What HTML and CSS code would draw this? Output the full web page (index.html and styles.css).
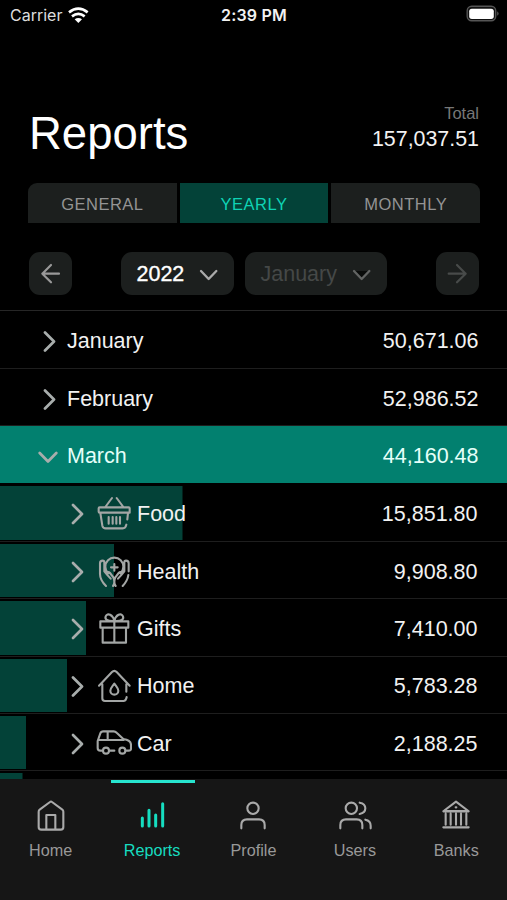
FILE: index.html
```html
<!DOCTYPE html>
<html lang="en">
<head>
<meta charset="utf-8">
<title>Reports</title>
<link rel="stylesheet" href="styles.css">
</head>
<body>
<div class="app">
  <header class="status">
    <div class="carrier">Carrier
      <svg width="21" height="16" viewBox="204 19 63 48" fill="none" stroke="#fff" stroke-width="8"><path d="M207 35Q235 13 263 35M216 47Q235 32 254 47"/><path d="M224 56Q235 48 246 56L235 67Z" fill="#fff" stroke="none"/></svg>
    </div>
    <div class="time">2:39 PM</div>
    <div class="battery"><svg width="34" height="18" viewBox="0 0 34 18"><rect x="1.2" y="1.2" width="28.5" height="14.6" rx="4.5" fill="#111" stroke="#555" stroke-width="1.4"/><rect x="3.2" y="3.7" width="24.6" height="10.2" rx="2.6" fill="#fff"/><path d="M31.3 6.2Q33.8 8.5 31.3 10.8Z" fill="#666"/></svg></div>
  </header>

  <section class="heading">
    <h1>Reports</h1>
    <div class="total"><span class="total-label">Total</span><span class="total-value">157,037.51</span></div>
  </section>

  <nav class="segments">
    <button class="segment">GENERAL</button>
    <button class="segment active">YEARLY</button>
    <button class="segment">MONTHLY</button>
  </nav>

  <section class="period">
    <button class="step"><svg width="43" height="43" viewBox="88 245 129 129"><path d="M178 310H128M154 284L128 310L154 336"/></svg></button>
    <div class="selects">
      <button class="select year">2022 <svg width="20" height="14" viewBox="598 292 60 42"><path d="M604 301L627 325L650 301"/></svg></button>
      <button class="select month">January <svg width="20" height="14" viewBox="598 292 60 42"><path d="M604 301L627 325L650 301"/></svg></button>
    </div>
    <button class="step off"><svg width="43" height="43" viewBox="548 245 129 129"><path d="M586 310H637M611 284L637 310L611 336"/></svg></button>
  </section>

  <main class="list">
    <div class="row first"><svg class="chev" width="22" height="22" viewBox="0 0 22 22"><path d="M7 2.5L16 11.5L7 20.5"/></svg><span class="name">January</span><span class="amount">50,671.06</span></div>
    <div class="row"><svg class="chev" width="22" height="22" viewBox="0 0 22 22"><path d="M7 2.5L16 11.5L7 20.5"/></svg><span class="name">February</span><span class="amount">52,986.52</span></div>
    <div class="row open"><svg class="chev" width="22" height="22" viewBox="0 0 22 22"><path d="M1.7 8L10 16.5L18.3 8"/></svg><span class="name">March</span><span class="amount">44,160.48</span></div>

    <div class="row sub lead" style="--bar:182.5px"><svg class="chev" width="22" height="22" viewBox="0 0 22 22"><path d="M7 2L16 11L7 20"/></svg>
      <svg class="icon" width="36" height="36" viewBox="288 48 108 108"><path d="M336 54L316 81M350 54L370 81M376 98H299Q296 98 296 95V85Q296 82 299 82H386Q389 82 389 85V98H376M301 99L307 137Q309 145 317 145H368Q377 145 379 134M384 99L382 118M326 111V131M338 111V131M349 111V131M360 111V131"/></svg>
      <span class="name">Food</span><span class="amount">15,851.80</span></div>
    <div class="row sub" style="--bar:114px"><svg class="chev" width="22" height="22" viewBox="0 0 22 22"><path d="M7 2L16 11L7 20"/></svg>
      <svg class="icon" width="36" height="36" viewBox="288 220 108 108"><path d="M343 250V270M333 260H353M325 278Q316 270 316 258A27 27 0 0 1 370 258Q370 270 361 278M313 272V245Q313 240 308 240Q300 240 300 248V280Q300 298 318 316M373 272V245Q373 240 378 240Q386 240 386 248V272M385 283Q383 300 368 316M313 272L323 284L332 294M322 276Q326 272 330 277L340 290Q343 296 343 304Q343 311 339 316M373 272L363 284L354 294M364 276Q360 272 356 277L346 290Q343 296 343 304Q343 311 347 316"/></svg>
      <span class="name">Health</span><span class="amount">9,908.80</span></div>
    <div class="row sub" style="--bar:86px"><svg class="chev" width="22" height="22" viewBox="0 0 22 22"><path d="M7 2L16 11L7 20"/></svg>
      <svg class="icon" width="36" height="36" viewBox="288 391 108 108"><path d="M301 422H385V441H301ZM308 441V486H378V441M343 422V486M341 421C321 422 314 415 317 407C322 395 339 402 343 421C347 402 364 395 369 407C372 415 365 422 345 421"/></svg>
      <span class="name">Gifts</span><span class="amount">7,410.00</span></div>
    <div class="row sub" style="--bar:67px"><svg class="chev" width="22" height="22" viewBox="0 0 22 22"><path d="M7 2.5L16 11.5L7 20.5"/></svg>
      <svg class="icon" width="36" height="36" viewBox="288 113 108 108"><path d="M297 166L336 125Q343 118 350 125L389 166M307 162V204Q307 212 315 212H370Q378 212 380 200M379 162V184M343 160C337 169 331 174 331 181A12 12 0 0 0 355 181C355 174 349 169 343 160Z"/></svg>
      <span class="name">Home</span><span class="amount">5,783.28</span></div>
    <div class="row sub" style="--bar:26px"><svg class="chev" width="22" height="22" viewBox="0 0 22 22"><path d="M7 2L16 11L7 20"/></svg>
      <svg class="icon" width="36" height="36" viewBox="288 286 108 108"><path d="M307 360H301Q293 360 293 352V331L301 308Q303 302 310 302H341Q346 302 350 306L370 325Q393 328 393 343V354Q393 360 386 360H378M329 360H343M296 328H371M323 303V327"/><circle cx="318" cy="360" r="9"/><circle cx="367" cy="360" r="9"/></svg>
      <span class="name">Car</span><span class="amount">2,188.25</span></div>
    <div class="row sub" style="--bar:22.5px"></div>
  </main>

  <nav class="tabs">
    <a class="tab"><svg width="34" height="34" viewBox="102 87 102 102"><path d="M116 125Q116 121 119 119L150 96Q153 93 156 96L187 119Q190 121 190 125V171Q190 179 182 179H124Q116 179 116 171ZM139 179V135H166V179"/></svg><span>Home</span></a>
    <a class="tab active"><svg width="34" height="34" viewBox="406 87 102 102"><path class="bars" d="M428 144V168M448 121V168M468 135V168M489 101V168"/></svg><span>Reports</span></a>
    <a class="tab"><svg width="34" height="34" viewBox="-51 87 102 102"><circle cx="0" cy="115" r="17"/><path d="M-35 175V165Q-35 148 -18 148H18Q35 148 35 165V175"/></svg><span>Profile</span></a>
    <a class="tab"><svg width="34" height="34" viewBox="256 87 102 102"><circle cx="296" cy="115" r="17"/><path d="M263 175V165Q263 148 280 148H312Q329 148 329 165V175M321 98Q338 101 338 115Q338 129 321 132M338 149Q354 152 354 167V175"/></svg><span>Users</span></a>
    <a class="tab"><svg width="34" height="34" viewBox="557 87 102 102"><path d="M571 123L608 95L645 123ZM570 124H646M570 172H646M577 131V164M592 131V164M608 131V164M623 131V164M639 131V164M607 112H609"/></svg><span>Banks</span></a>
  </nav>
</div>
</body>
</html>
```
FILE: styles.css
```css
* { box-sizing: border-box; }
body { margin: 0; background: #000; color: #f2f2f2; font-family: "Liberation Sans", Arial, sans-serif; }
button { border: 0; padding: 0; font: inherit; color: inherit; }
h1 { margin: 0; font-weight: 400; }
svg { display: block; flex: none; }
path, circle { stroke-linecap: round; stroke-linejoin: round; }

.app { width: 507px; height: 900px; display: flex; flex-direction: column; overflow: hidden; }

.status { height: 30px; flex: none; display: grid; grid-template-columns: 1fr auto 1fr; align-items: center; padding: 0 7px 0 10px; font: 500 16px/30px Inter, sans-serif; }
.carrier { display: flex; align-items: center; gap: 6px; font-weight: 400; letter-spacing: 0; color: #ddd; }
.carrier path { stroke-linecap: butt; }
.carrier svg { margin-top: -1px; }
.time { font-weight: 600; letter-spacing: .2px; margin-left: -2px; }
.battery { display: flex; justify-content: flex-end; margin-top: -2px; }

.heading { height: 153px; flex: none; display: flex; justify-content: space-between; padding: 74px 28px 0 29px; }
h1 { font-size: 45.5px; line-height: 60px; color: #fff; }
.total { display: flex; flex-direction: column; align-items: flex-end; }
.total-label { font-size: 16.5px; line-height: 19px; color: #777; }
.total-value { font-size: 21.4px; line-height: 26px; margin-top: 3px; }

.segments { height: 40px; flex: none; display: grid; grid-template: 40px / repeat(3, 1fr); gap: 3px; padding: 0 27px 0 28px; }
.segment { background: #1c1f1e; color: #949494; font-size: 16.5px; letter-spacing: .5px; line-height: 40px; padding: 1px 0 0; }
.segment:first-child { border-top-left-radius: 9px; }
.segment:last-child { border-top-right-radius: 9px; }
.segment.active { background: #034238; color: #0fd3b5; }

.period { height: 87px; flex: none; display: flex; justify-content: space-between; padding: 29px 28px 0 29px; }
.step { width: 43px; height: 43px; border-radius: 11px; background: #1c1f1e; }
.step path { fill: none; stroke: #999; stroke-width: 6.5; }
.step.off path { stroke: #484b4a; }
.selects { display: flex; gap: 11px; margin-right: 1px; }
.select { height: 43px; border-radius: 11px; background: #1c1f1e; display: flex; align-items: center; justify-content: space-between; padding: 2px 15px 0 16px; font-size: 21.5px; }
.select path { fill: none; stroke: #aaa; stroke-width: 7; }
.year { width: 113px; color: #fff; -webkit-text-stroke: .35px #fff; }
.month { width: 142px; color: #454847; }
.select.month path { stroke: #626463; fill: #090b0a; }

.list { flex: none; height: 469px; overflow: hidden; border-top: 1px solid #262626; }
.row { height: 57.3px; display: flex; align-items: center; padding: 4px 28.5px 0 38px; border-bottom: 1px solid #1e1e1e; font-size: 21.5px; line-height: 26px; }
.row.first { height: 57.7px; }
.row.open { background: #02806f; color: #e5fff9; border-color: #02806f; }
.chev { margin-right: 7px; }
.chev path, .icon path, .icon circle { fill: none; stroke: #a8adac; stroke-width: 2.7; }
.icon { margin-right: 5px; }
.icon path, .icon circle { stroke-width: 6.3; stroke: #a3a6a5; }
.amount { margin-left: auto; }
.sub { padding: 3px 29.5px 0 66px; background: linear-gradient(#034238, #034238) 0 2px / var(--bar) calc(100% - 3px) no-repeat; }
.sub .chev { margin-right: 8px; }
.sub.lead { height: 58.8px; padding-top: 4px; background-position: 0 3px; background-size: var(--bar) calc(100% - 4px); }

.tabs { flex: none; height: 121px; background: #161616; display: grid; grid-template-columns: repeat(5, 1fr); }
.tab { display: flex; flex-direction: column; align-items: center; color: #999; font-size: 16.2px; line-height: 20px; padding-top: 17px; border-top: 3px solid transparent; }
.tab svg { margin-bottom: 7px; }
.tab path, .tab circle { fill: none; stroke: #aaa; stroke-width: 6.3; }
.tab .bars { stroke: #16ddc0; stroke-width: 9; }
.tab.active { color: #16ddc0; background: linear-gradient(#27e5cf, #27e5cf) 9.5px 1px / 84px 3px no-repeat border-box; }
```
